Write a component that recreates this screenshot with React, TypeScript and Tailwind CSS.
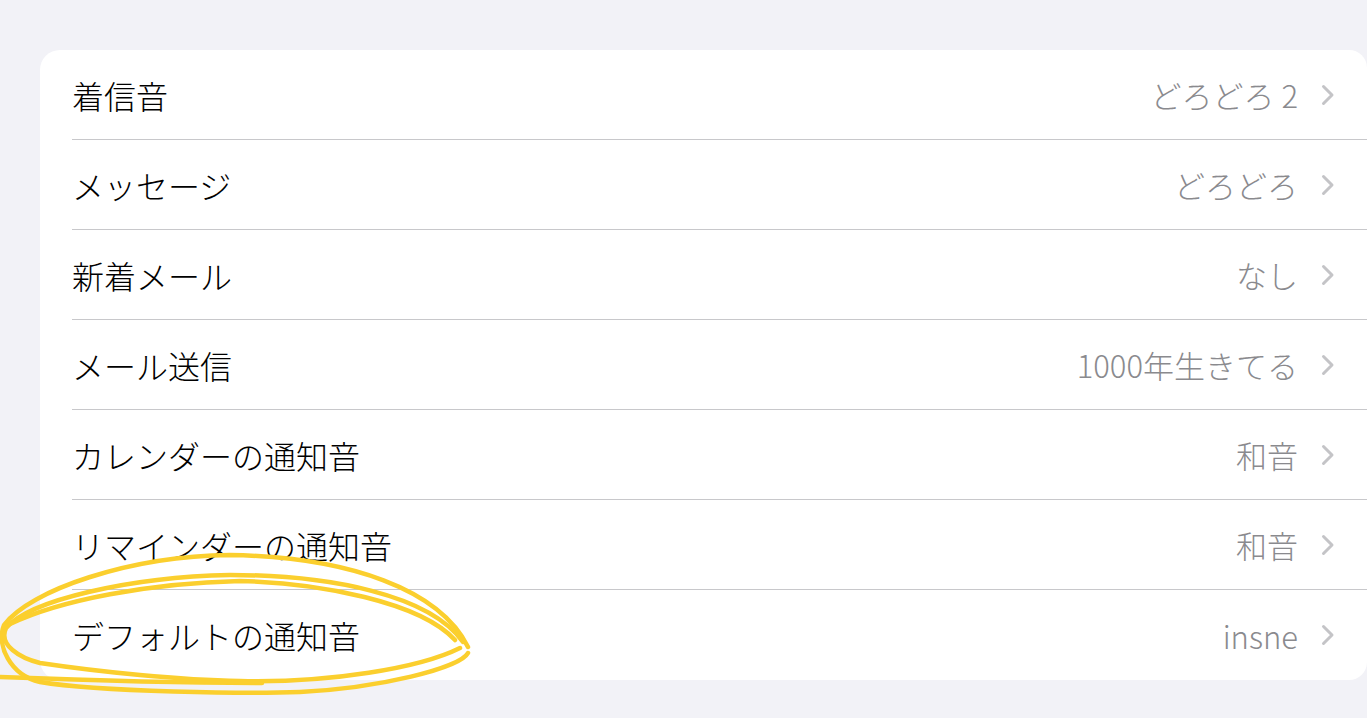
import * as React from "react";

type Row = { label: string; value: string };

const rows: Row[] = [
  { label: "着信音", value: "どろどろ 2" },
  { label: "メッセージ", value: "どろどろ" },
  { label: "新着メール", value: "なし" },
  { label: "メール送信", value: "1000年生きてる" },
  { label: "カレンダーの通知音", value: "和音" },
  { label: "リマインダーの通知音", value: "和音" },
  { label: "デフォルトの通知音", value: "insne" },
];

const Chevron = () => (
  <svg width="14" height="22" viewBox="0 0 14 22" className="ml-[23px] shrink-0">
    <path
      d="M2.5 2.5 L11 11 L2.5 19.5"
      fill="none"
      stroke="#c4c4c7"
      strokeWidth="3"
      strokeLinecap="round"
      strokeLinejoin="round"
    />
  </svg>
);

// hand-drawn highlight loop around the last row
const Scribble = () => (
  <svg
    width="480"
    height="160"
    viewBox="0 545 480 160"
    className="pointer-events-none absolute left-0 top-[545px]"
  >
    <g fill="none" stroke="#fbcf2e" strokeWidth="4.5" strokeLinecap="round">
      <path d="M468 647 C440 590 350 557 230 555 C130 556 30 590 4 625 C-4 645 10 675 40 682 C100 692 250 694 300 692 C380 688 460 668 468 653" />
      <path d="M463 642 C430 595 330 575 230 575 C130 577 30 600 6 628 C-2 645 20 658 40 663 C100 672 180 680 240 681 C330 683 420 668 460 648" />
      <path d="M455 640 C420 602 320 583 240 581 C150 583 60 600 10 624" />
      <path d="M262 683 C180 683 80 680 0 677" />
    </g>
  </svg>
);

export default function App() {
  return (
    <div
      className="relative h-[718px] w-[1367px] overflow-hidden bg-[#f2f2f7] pl-[40px] pt-[50px]"
      style={{ fontFamily: '"Noto Sans CJK JP", "Noto Sans", sans-serif' }}
    >
      <div className="w-[1327px] rounded-l-[20px] rounded-r-[18px] bg-white pl-[32px]">
        {rows.map((r, i) => (
          <div
            key={r.label}
            className={
              i < rows.length - 1
                ? "flex h-[90px] items-center border-b border-[#c8c8cb] pr-[32px]"
                : "flex h-[90px] items-center pr-[32px]"
            }
          >
            <span className="flex-1 text-[32px] font-light leading-none text-black">{r.label}</span>
            <span className="text-[31px] font-light leading-none text-[#8a8a8e]">{r.value}</span>
            <Chevron />
          </div>
        ))}
      </div>
      <Scribble />
    </div>
  );
}
